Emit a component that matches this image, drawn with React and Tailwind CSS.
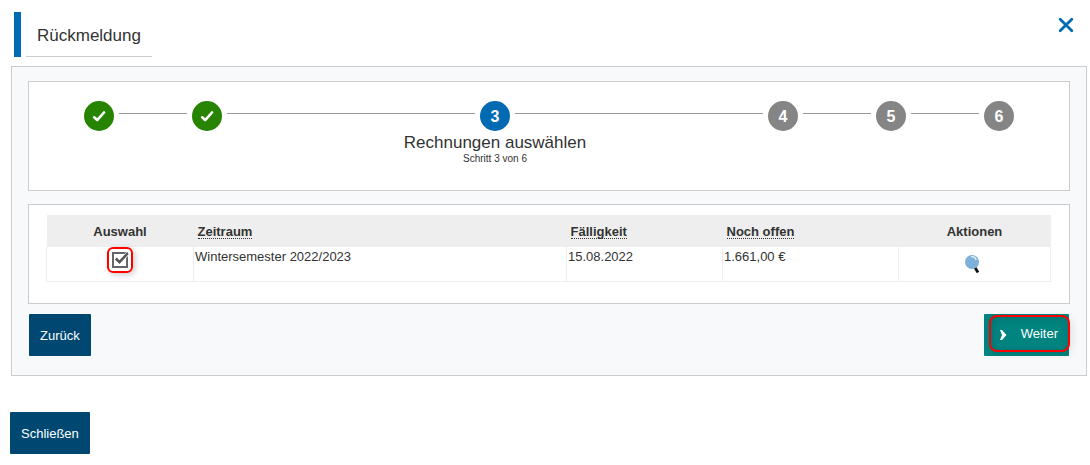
import React, { useState } from 'react';

const steps = [
  { id: 1, state: 'done' },
  { id: 2, state: 'done' },
  { id: 3, state: 'current', title: 'Rechnungen auswählen' },
  { id: 4, state: 'open' },
  { id: 5, state: 'open' },
  { id: 6, state: 'open' },
];

const circleColors = {
  done: 'bg-[#268400]',
  current: 'bg-[#006ab3]',
  open: 'bg-[#858585]',
};

const rows = [{ id: 1, period: 'Wintersemester 2022/2023', due: '15.08.2022', amount: '1.661,00 €' }];

const Stepper = () => (
  <ol className="flex items-start px-[50px] pt-[19px] h-[108px]">
    {steps.map((step, i) => {
      const wide = step.state === 'current' || steps[i - 1]?.state === 'current';
      return (
        <React.Fragment key={step.id}>
          {i > 0 && (
            <li aria-hidden="true" className={`mt-3 h-px bg-[#999] ${wide ? 'flex-[62]' : 'flex-[17]'}`} />
          )}
          <li className="flex w-10 shrink-0 flex-col items-center whitespace-nowrap">
            <span
              className={`flex size-[30px] items-center justify-center rounded-full pt-px text-base font-bold text-white ${circleColors[step.state]}`}
            >
              {step.state === 'done' ? (
                <svg width="14" height="12" viewBox="0 0 14 12" fill="none" role="img" aria-label="Erledigt">
                  <path d="M2.2 6.3L5.2 9.1L12 1.5" stroke="white" strokeWidth="2.6" strokeLinecap="round" strokeLinejoin="round" />
                </svg>
              ) : (
                step.id
              )}
            </span>
            {step.title && (
              <>
                <span className="text-[17px] leading-6">{step.title}</span>
                <span className="text-[10px] leading-2">
                  Schritt {step.id} von {steps.length}
                </span>
              </>
            )}
          </li>
        </React.Fragment>
      );
    })}
  </ol>
);

const SortHeader = ({ children }) => (
  <th scope="col" className="px-1 pt-px text-left">
    <button className="border-b border-dotted border-[#333] font-bold leading-[13px]">{children}</button>
  </th>
);

const InvoiceTable = () => {
  const [selected, setSelected] = useState([1]);

  const toggle = (id) => {
    setSelected(selected.includes(id) ? selected.filter((s) => s !== id) : [...selected, id]);
  };

  return (
    <table className="w-full table-fixed border-collapse text-[13px]">
      <colgroup>
        <col className="w-[147px]" />
        <col />
        <col className="w-[156px]" />
        <col className="w-[176px]" />
        <col className="w-[152px]" />
      </colgroup>
      <thead>
        <tr className="h-8 bg-[#eee]">
          <th scope="col" className="pt-0.5">Auswahl</th>
          <SortHeader>Zeitraum</SortHeader>
          <SortHeader>Fälligkeit</SortHeader>
          <SortHeader>Noch offen</SortHeader>
          <th scope="col" className="pt-0.5">Aktionen</th>
        </tr>
      </thead>
      <tbody>
        {rows.map((row) => (
          <tr key={row.id} className="h-[34px] align-top leading-5">
            <td className="border border-t-0 border-[#eee]">
              {/* rote Markierung um das Kontrollkästchen */}
              <label className="mx-auto flex h-[26px] w-[26px] items-center justify-center rounded-md border-2 border-[#ff0000] shadow-[2px_2px_6px_rgba(0,0,0,0.2)]">
                <span className="relative block size-4">
                  <input
                    type="checkbox"
                    aria-label={`${row.period} auswählen`}
                    checked={selected.includes(row.id)}
                    onChange={() => toggle(row.id)}
                    className="block size-4 appearance-none border-2 border-[#666] bg-white"
                  />
                  {selected.includes(row.id) && (
                    <svg className="pointer-events-none absolute inset-0 overflow-visible" width="16" height="16" viewBox="0 0 16 16" fill="none">
                      <path d="M4 6.5L7.5 10.5L16 1" stroke="white" strokeWidth="4" />
                      <path d="M3.8 6.5L7.5 10.2L15.8 1.2" stroke="#555" strokeWidth="2.6" />
                    </svg>
                  )}
                </span>
              </label>
            </td>
            <td className="border border-t-0 border-[#eee] px-px">{row.period}</td>
            <td className="border border-t-0 border-[#eee] px-px">{row.due}</td>
            <td className="border border-t-0 border-[#eee] px-px">{row.amount}</td>
            <td className="border border-t-0 border-[#eee] pr-[5px] pt-2">
              <button aria-label="Details anzeigen" className="mx-auto block">
                <svg width="16" height="18" viewBox="0 0 16 18">
                  <path d="M11 12.5L14 17.5" stroke="#111" strokeWidth="2.8" />
                  <circle cx="8" cy="7" r="7" fill="#7db1d9" />
                  <path d="M7 1.8Q11 1.2 12.2 5" fill="none" stroke="#e3f0fa" strokeWidth="1.3" />
                </svg>
              </button>
            </td>
          </tr>
        ))}
      </tbody>
    </table>
  );
};

const App = () => {
  return (
    <div className="bg-white pb-[11px] pl-[11px] pr-[3px] pt-3 font-['Liberation_Sans',Arial,sans-serif] text-[#333]">
      <header className="flex items-start justify-between pl-[3px] pr-[13px]">
        <div className="flex">
          <div className="h-[45px] w-[7px] bg-[#006ab3]" />
          <h1 className="ml-[5px] h-[45px] border-b border-[#ccc] px-[11px] text-[17px] leading-[48px]">Rückmeldung</h1>
        </div>
        <button aria-label="Dialog schließen" className="mt-[5px]">
          <svg width="16" height="16" viewBox="0 0 16 16" stroke="#006ab3" strokeWidth="2.8" strokeLinecap="round">
            <path d="M2.2 2.2L13.8 13.8M13.8 2.2L2.2 13.8" />
          </svg>
        </button>
      </header>

      <main className="mt-[9px] border border-[#ccc] bg-[#f8f9fb] px-4 pb-[19px] pt-[14px]">
        <section className="border border-[#ccc] bg-white">
          <Stepper />
        </section>

        <section className="mt-[13px] border border-[#ccc] bg-white pb-[21px] pl-[17px] pr-[18px] pt-[10px]">
          <InvoiceTable />
        </section>

        <div className="mt-[10px] flex justify-between px-px text-[13px] text-white">
          <button className="h-[42px] rounded-[1px] bg-[#004872] px-[11px] pt-0.5">Zurück</button>
          <button className="relative flex h-[42px] items-center rounded-[1px] bg-[#008480] pb-0.5 pl-4 pr-[11px]">
            <svg width="7" height="10" viewBox="0 0 7 10" className="mt-0.5">
              <path d="M0 0H2L6.5 5L2 10H0L2 5Z" fill="white" />
            </svg>
            <span className="ml-[14px]">Weiter</span>
            {/* rote Markierung */}
            <span className="absolute -right-px bottom-1 left-[5px] top-px rounded-lg border-2 border-[#ff0000] shadow-[2px_2px_8px_rgba(0,0,0,0.1),inset_1px_1px_8px_rgba(0,0,0,0.15)]" />
          </button>
        </div>
      </main>

      <button className="-ml-px mt-9 h-[42px] rounded-[1px] bg-[#004872] px-[11px] pt-0.5 text-[13px] text-white">Schließen</button>
    </div>
  );
};

export default App;
